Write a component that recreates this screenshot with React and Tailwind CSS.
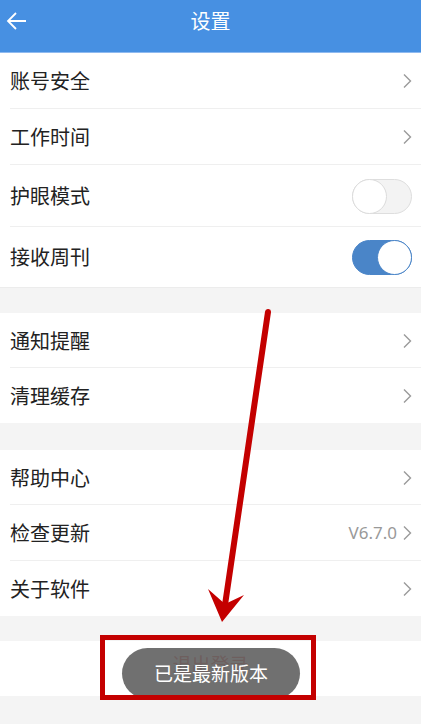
import React, { useState } from 'react'

const font = { fontFamily: '"Noto Sans CJK SC", "Noto Sans", sans-serif' }

function Chevron() {
    return (
        <svg width="10" height="16" viewBox="0 0 10 16" className="shrink-0">
            <path d="M2 1.5 L8.5 8 L2 14.5" fill="none" stroke="#9a9a9a" strokeWidth="1.4" />
        </svg>
    )
}

function Toggle({ on, onClick }) {
    return (
        <button
            onClick={onClick}
            className={`relative w-[60px] h-[35px] rounded-full border ${on ? 'bg-[#4a85c8] border-[#4a85c8]' : 'bg-[#f3f3f3] border-[#dedede]'}`}
        >
            <span
                className={`absolute top-[-1px] w-[35px] h-[35px] rounded-full bg-white border ${on ? 'right-[-1px] border-[#4a85c8]' : 'left-[-1px] border-[#dcdcdc]'}`}
            />
        </button>
    )
}

function Row({ label, right, last, h = 'h-[56px]' }) {
    return (
        <div className={`relative flex items-center justify-between pl-[10px] pr-[9px] ${h}`}>
            <span className="text-[20px] text-[#222]">{label}</span>
            {right ?? <Chevron />}
            {!last && <div className="absolute left-[10px] right-0 bottom-0 h-px bg-[#efefef]" />}
        </div>
    )
}

export default function App() {
    const [eye, setEye] = useState(false)
    const [weekly, setWeekly] = useState(true)

    return (
        <div className="relative w-[421px] h-[724px] overflow-hidden bg-[#f4f4f4]" style={font}>
            {/* header */}
            <div className="relative h-[53px] bg-[#4790e2] border-b border-[#8fbaf0] flex items-center justify-center">
                <svg width="22" height="20" viewBox="0 0 22 20" className="absolute left-[6px] top-[11px]">
                    <path d="M20 10 H2 M10 2 L2 10 L10 18" fill="none" stroke="#fff" strokeWidth="1.8" />
                </svg>
                <span className="text-white text-[20px] -mt-[10px] pt-[0px]">设置</span>
            </div>

            <div className="bg-white">
                <Row label="账号安全" />
                <Row label="工作时间" />
                <Row label="护眼模式" h="h-[62px]" right={<Toggle on={eye} onClick={() => setEye(!eye)} />} />
                <Row label="接收周刊" h="h-[60px]" last right={<Toggle on={weekly} onClick={() => setWeekly(!weekly)} />} />
            </div>

            <div className="h-[26px] border-t border-[#ececec]" />

            <div className="bg-white">
                <Row label="通知提醒" h="h-[55px]" />
                <Row label="清理缓存" h="h-[55px]" last />
            </div>

            <div className="h-[27px]" />

            <div className="bg-white">
                <Row label="帮助中心" h="h-[55px]" />
                <Row
                    label="检查更新"
                    right={
                        <div className="flex items-center gap-[5px]">
                            <span className="text-[17px] text-[#999]" style={{ fontFamily: '"Noto Sans", sans-serif' }}>V6.7.0</span>
                            <Chevron />
                        </div>
                    }
                />
                <Row label="关于软件" h="h-[55px]" last />
            </div>

            <div className="h-[25px]" />

            <div className="bg-white h-[55px] flex items-center justify-center">
                <span className="text-[19px] text-[#e3504a] -mt-[8px]">退出登录</span>
            </div>

            {/* toast */}
            <div className="absolute left-[122px] top-[648px] w-[178px] h-[51px] rounded-full bg-[#606060]/90 flex items-center justify-center">
                <span className="text-white text-[19px]">已是最新版本</span>
            </div>

            {/* annotation box */}
            <div className="absolute left-[100px] top-[635px] w-[216px] h-[65px] border-[5px] border-[#c40000]" />

            {/* annotation arrow */}
            <svg className="absolute left-0 top-0" width="421" height="724" viewBox="0 0 421 724">
                <line x1="268" y1="312" x2="225" y2="605" stroke="#c40000" strokeWidth="6" strokeLinecap="round" />
                <polygon points="222,622 208,589 225,604 244,595" fill="#c40000" />
            </svg>
        </div>
    )
}
